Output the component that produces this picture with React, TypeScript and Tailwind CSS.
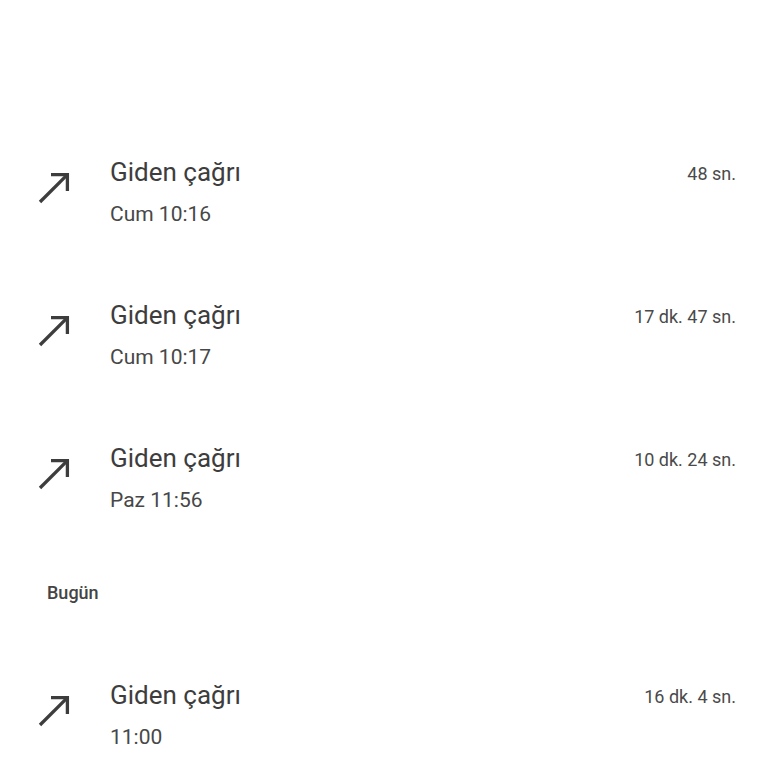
const calls = [
  { day: "Cum 10:16", duration: "48 sn." },
  { day: "Cum 10:17", duration: "17 dk. 47 sn." },
  { day: "Paz 11:56", duration: "10 dk. 24 sn." },
];

function OutgoingArrow() {
  return (
    <svg width="34" height="34" viewBox="0 0 34 34" fill="none" className="shrink-0 mt-[15px] overflow-visible">
      <path d="M14 3.6H30.4V20" stroke="#3d3d3d" strokeWidth="3.3" strokeLinejoin="miter" />
      <path d="M30.4 3.6L3 31" stroke="#3d3d3d" strokeWidth="3.3" />
    </svg>
  );
}

function CallRow({ day, duration }: { day: string; duration: string }) {
  return (
    <div className="h-[143px] flex items-center pl-[37px] pr-8">
      <div className="flex items-start w-full">
        <OutgoingArrow />
        <div className="ml-[39px] flex-1">
          <div className="text-[26px] leading-8 text-[#3d3d3d]">Giden çağrı</div>
          <div className="mt-3 text-[21px] leading-7 text-[#474747]">{day}</div>
        </div>
        <div className="text-[18px] leading-8 text-[#4a4a4a] mt-[2px]">{duration}</div>
      </div>
    </div>
  );
}

export default function App() {
  return (
    <div
      className="min-h-screen bg-white pt-[120px]"
      style={{ fontFamily: "Roboto, 'Noto Sans', sans-serif" }}
    >
      {calls.map((c) => (
        <CallRow key={c.day} day={c.day} duration={c.duration} />
      ))}

      {/* Bugün */}
      <div className="h-[94px] pt-[33px] pl-[47px]">
        <div className="text-[18px] leading-[22px] font-medium text-[#444444]">Bugün</div>
      </div>

      <CallRow day="11:00" duration="16 dk. 4 sn." />
    </div>
  );
}
